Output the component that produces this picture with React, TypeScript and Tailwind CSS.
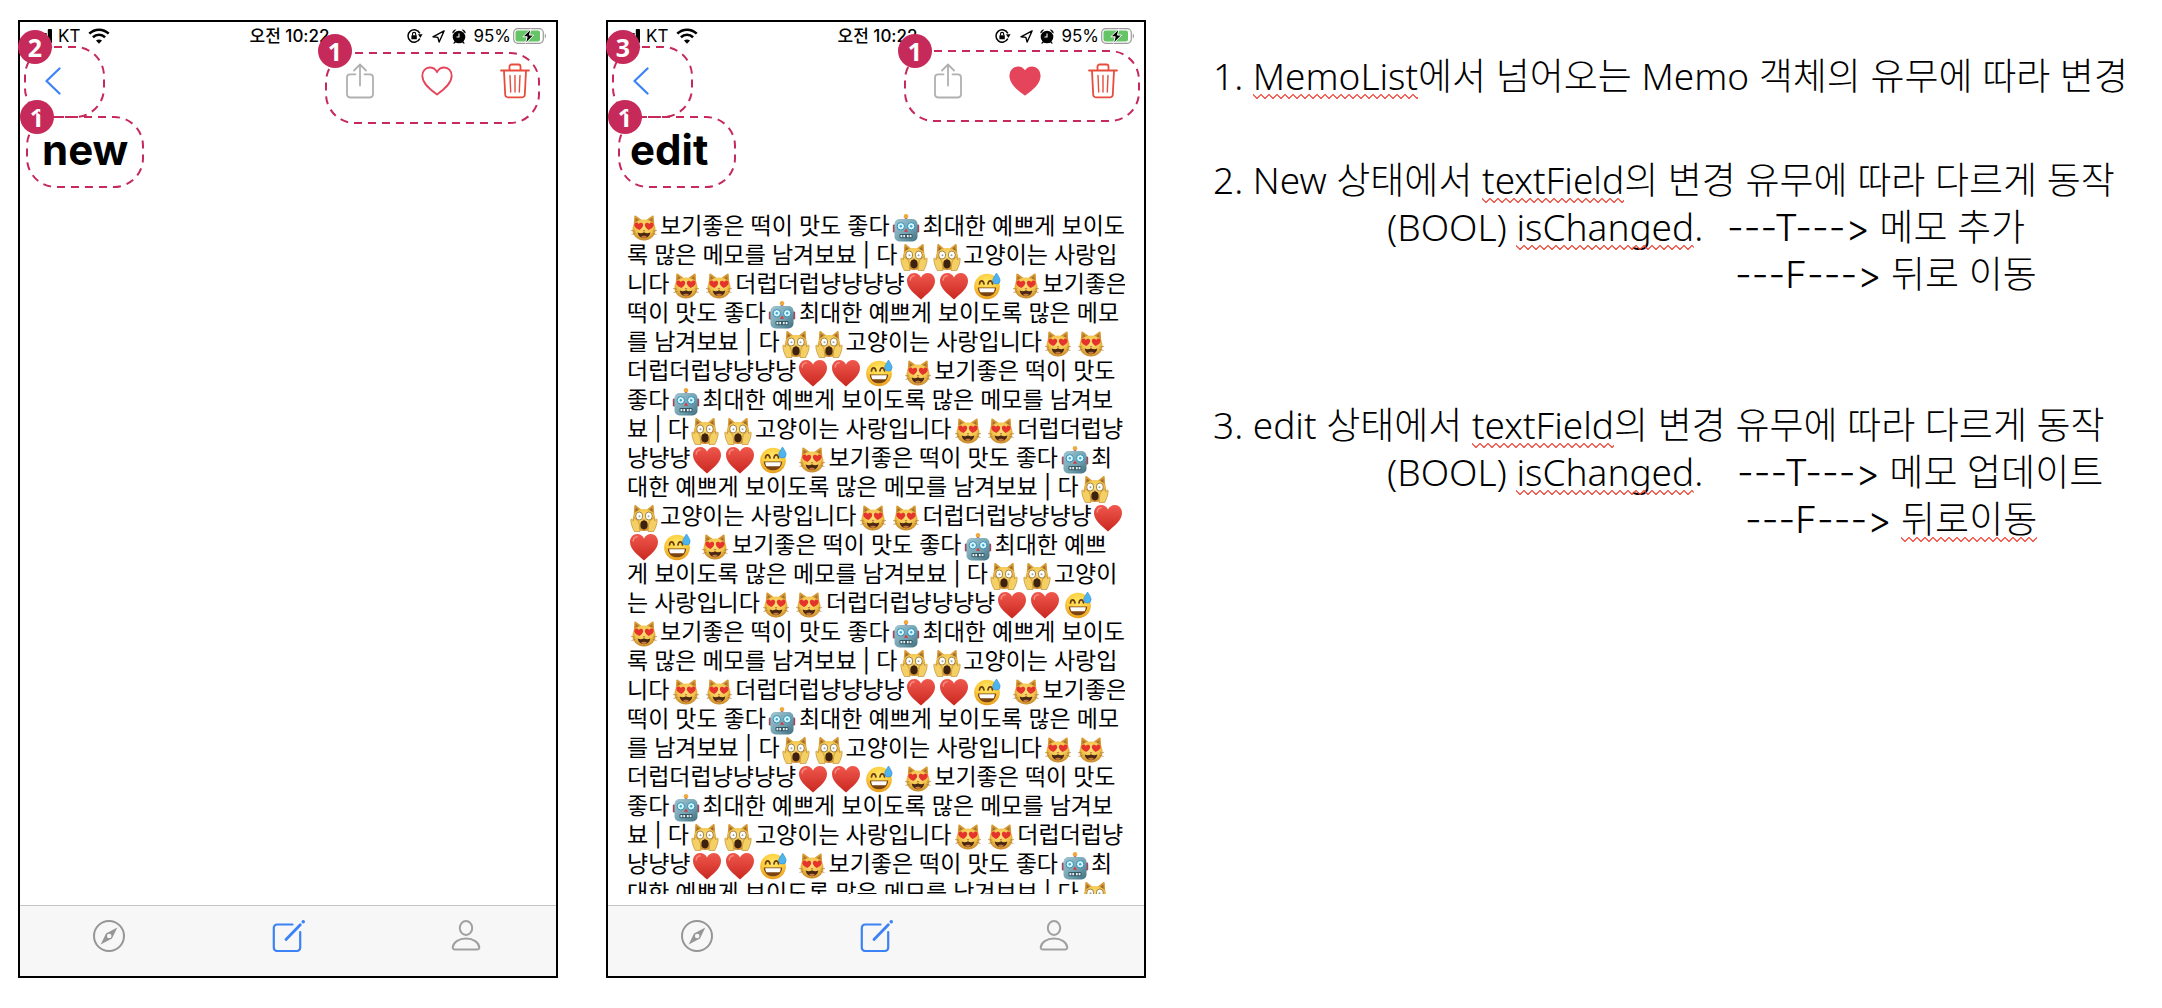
import React from "react";

type EmojiName = "cat" | "robot" | "scream" | "heart" | "sweat";

function EmojiDefs() {
  return (
    <svg width="0" height="0" className="absolute" aria-hidden="true">
      <defs>
        <radialGradient id="catFur" cx="50%" cy="35%" r="65%">
          <stop offset="0" stopColor="#fbe27a" />
          <stop offset="0.6" stopColor="#f2c249" />
          <stop offset="1" stopColor="#c8862a" />
        </radialGradient>
        <radialGradient id="smileSkin" cx="50%" cy="35%" r="65%">
          <stop offset="0" stopColor="#ffe867" />
          <stop offset="0.65" stopColor="#fccb3b" />
          <stop offset="1" stopColor="#e79a1c" />
        </radialGradient>
        <linearGradient id="heartRed" x1="0" y1="0" x2="0" y2="1">
          <stop offset="0" stopColor="#f0584d" />
          <stop offset="1" stopColor="#c9271f" />
        </linearGradient>
        <linearGradient id="robotSteel" x1="0" y1="0" x2="1" y2="1">
          <stop offset="0" stopColor="#a3c6d2" />
          <stop offset="0.6" stopColor="#6f9fae" />
          <stop offset="1" stopColor="#3f6e7e" />
        </linearGradient>

        <symbol id="emoji-cat" viewBox="0 0 28 28">
          <path d="M3.500 14 4.300 2.200c.1-.9 1-1 1.600-.5l5.500 4.100ZM24.500 14l-.8-11.800c-.1-.9-1-1-1.600-.5l-5.500 4.100Z" fill="#d99a33" />
          <path d="m5.300 8 .5-4.300L9 6.200ZM22.700 8l-.5-4.300L19 6.200Z" fill="#a8742f" />
          <path d="M14 5.500c7 0 11.500 4.200 11.500 10.300C25.500 22.500 20 26.500 14 26.500S2.500 22.500 2.500 15.800C2.500 9.700 7 5.500 14 5.500Z" fill="url(#catFur)" />
          <path d="M1 16.500l4 .6M1.500 20.500l4-1.200M27 16.500l-4 .6M26.500 20.500l-4-1.200" stroke="#a06c28" strokeWidth="0.600" fill="none" />
          <path d="M9.300 16C4.300 13.800 3.600 11 4.800 9.300c1.300-1.600 3.400-.9 4 .6 1-1.400 3.400-1.500 4.200.1.700 1.700-.5 4.200-3.700 6Z" fill="#e4342c" />
          <path d="M18.700 16c5-2.200 5.700-5 4.500-6.700-1.300-1.600-3.400-.9-4 .6-1-1.400-3.400-1.500-4.200.1-.7 1.700.5 4.200 3.700 6Z" fill="#e4342c" />
          <path d="M12.700 16.300h2.600L14 17.700Z" fill="#b4553a" />
          <path d="M7.700 18.600c2.300 1 4.500.8 6.300-.3 1.800 1.100 4 1.300 6.300.3-.3 3.500-3 5.600-6.300 5.600s-6-2.100-6.300-5.600Z" fill="#4b2813" />
          <path d="M10.800 22.900c1.400-1.500 5-1.500 6.400 0-1.700 1.500-4.700 1.500-6.400 0Z" fill="#c67a3c" />
        </symbol>

        <symbol id="emoji-scream" viewBox="0 0 28 28">
          <path d="M3.500 14 4.300 1.800c.1-.9 1-1 1.600-.5l5.500 4.500ZM24.500 14l-.8-12.200c-.1-.9-1-1-1.600-.5l-5.500 4.500Z" fill="#d99a33" />
          <path d="m5.300 8 .5-4.500L9 6.200ZM22.700 8l-.5-4.500L19 6.200Z" fill="#9a6a30" />
          <path d="M14 5c7 0 11.300 4.200 11.300 10.800C25.300 23 20.500 27 14 27S2.700 23 2.700 15.800C2.700 9.200 7 5 14 5Z" fill="url(#catFur)" />
          <ellipse cx="9.200" cy="12" rx="3.500" ry="4" fill="#fff" stroke="#8c6a2c" strokeWidth="0.800" />
          <ellipse cx="18.800" cy="12" rx="3.500" ry="4" fill="#fff" stroke="#8c6a2c" strokeWidth="0.800" />
          <circle cx="9.500" cy="12.300" r="1" fill="#9aa3a0" />
          <circle cx="18.500" cy="12.300" r="1" fill="#9aa3a0" />
          <ellipse cx="14" cy="21" rx="3.700" ry="4.400" fill="#3e2210" />
          <path d="M12.600 15.800h2.800L14 17.200Z" fill="#7a3d26" />
          <path d="M.8 15.500c1-.8 1.800 0 2.300 1.300l1-2.300c.9-.9 1.900-.2 1.800 1l1.600.7c1.700 2.300 2 5 2.500 11.300H4.300C2.500 24 .8 20 .8 15.500Z" fill="#f4cf63" stroke="#b88328" strokeWidth="0.600" />
          <path d="M27.200 15.500c-1-.8-1.800 0-2.300 1.300l-1-2.300c-.9-.9-1.900-.2-1.800 1l-1.600.7c-1.700 2.300-2 5-2.500 11.300h5.700c1.800-3.500 3.500-7.500 3.500-12Z" fill="#f4cf63" stroke="#b88328" strokeWidth="0.600" />
        </symbol>

        <symbol id="emoji-heart" viewBox="0 0 28 28">
          <path d="M14 27.500C8 22 0 16.500 0 9 0 4.300 3.200 1 7.200 1c3 0 5.400 1.700 6.800 4.500C15.400 2.700 17.800 1 20.800 1 24.800 1 28 4.300 28 9 28 16.500 20 22 14 27.500Z" fill="url(#heartRed)" />
          <path d="M3.200 8c.2-2.400 1.800-4 4-4.200" stroke="#f98c80" strokeWidth="1.400" strokeLinecap="round" fill="none" />
        </symbol>

        <symbol id="emoji-sweat" viewBox="0 0 28 28">
          <circle cx="14" cy="14.500" r="12.800" fill="url(#smileSkin)" />
          <path d="M6.500 12c.4-4.300 3.800-4.300 4.500 0M15 12c.5-4.300 4-4.300 4.500 0" stroke="#6b3d12" strokeWidth="1.700" fill="none" strokeLinecap="round" />
          <path d="M4.800 15.500h18.400c0 5.300-4 8.800-9.200 8.800s-9.200-3.500-9.200-8.800Z" fill="#7a4312" />
          <path d="M6.200 16.300h15.600c-.1 1.700-.6 2.900-1.300 4h-13c-.7-1.100-1.200-2.300-1.300-4Z" fill="#fff" />
          <path d="M23.500 1c2.200 3.400 3.600 5.500 3.600 7.400a3.700 3.700 0 0 1-7.400 0C19.700 6.500 21.500 4.300 23.500 1Z" fill="#4fb3ee" stroke="#2c8fd4" strokeWidth="0.600" />
        </symbol>

        <symbol id="emoji-robot" viewBox="0 0 28 28">
          <rect x="12.800" y="2" width="2.400" height="4.500" fill="#8a5f9e" />
          <circle cx="14" cy="2.200" r="2.200" fill="#f0a83a" />
          <rect x="0.800" y="10.500" width="3" height="8" rx="1.200" fill="#9b4a5c" />
          <rect x="24.200" y="10.500" width="3" height="8" rx="1.200" fill="#9b4a5c" />
          <rect x="2.500" y="5" width="23" height="22.500" rx="5" fill="url(#robotSteel)" />
          <circle cx="8.800" cy="12.300" r="3.700" fill="#d9f6ff" stroke="#2f8fb5" strokeWidth="1" />
          <circle cx="19.200" cy="12.300" r="3.700" fill="#d9f6ff" stroke="#2f8fb5" strokeWidth="1" />
          <circle cx="8.800" cy="12.300" r="1.200" fill="#3ba9cf" />
          <circle cx="19.200" cy="12.300" r="1.200" fill="#3ba9cf" />
          <path d="m14 14.500 2 3.300h-4Z" fill="#d8383b" />
          <rect x="7.500" y="20" width="13" height="4.200" rx="1.200" fill="#335663" />
          <path d="M8.500 21h1.800v2.200H8.500zM11.300 21h1.800v2.200h-1.800zM14.900 21h1.800v2.200h-1.800zM17.700 21h1.800v2.200h-1.800z" fill="#e6f0f2" />
        </symbol>

        <pattern id="zigzag" width="8" height="6" patternUnits="userSpaceOnUse">
          <path d="M-1 0 4 5 9 0" transform="translate(0 0.5)" stroke="#ea3b2c" strokeWidth="1.200" fill="none" />
        </pattern>
      </defs>
    </svg>
  );
}

const EMOJI: Record<string, { id: EmojiName; label: string }> = {
  C: { id: "cat", label: "하트 눈 고양이" },
  R: { id: "robot", label: "로봇" },
  S: { id: "scream", label: "놀란 고양이" },
  H: { id: "heart", label: "빨간 하트" },
  W: { id: "sweat", label: "식은땀 웃음" },
};

function Emoji({ code }: { code: string }) {
  const { id, label } = EMOJI[code];
  return (
    <span className="inline-flex w-[33px] justify-center align-middle">
      <svg viewBox="0 0 28 28" role="img" aria-label={label} className="h-7 w-7">
        <use href={"#emoji-" + id} />
      </svg>
    </span>
  );
}

const CYCLE = [
  "C보기좋은 떡이 맛도 좋다R최대한 예쁘게 보이도",
  "록 많은 메모를 남겨보뵤 | 다SS고양이는 사랑입",
  "니다CC더럽더럽냥냥냥냥HHW C보기좋은",
  "떡이 맛도 좋다R최대한 예쁘게 보이도록 많은 메모",
  "를 남겨보뵤 | 다SS고양이는 사랑입니다CC",
  "더럽더럽냥냥냥냥HHW C보기좋은 떡이 맛도",
  "좋다R최대한 예쁘게 보이도록 많은 메모를 남겨보",
  "뵤 | 다SS고양이는 사랑입니다CC더럽더럽냥",
  "냥냥냥HHW C보기좋은 떡이 맛도 좋다R최",
  "대한 예쁘게 보이도록 많은 메모를 남겨보뵤 | 다S",
  "S고양이는 사랑입니다CC더럽더럽냥냥냥냥H",
  "HW C보기좋은 떡이 맛도 좋다R최대한 예쁘",
  "게 보이도록 많은 메모를 남겨보뵤 | 다SS고양이",
  "는 사랑입니다CC더럽더럽냥냥냥냥HHW",
];
const MEMO = [...CYCLE, ...CYCLE.slice(0, 10)];

function MemoLine({ text }: { text: string }) {
  return (
    <p className="h-[29px] whitespace-pre">
      {text.split(/([CRSHW|])/).map((part, i) => {
        if (EMOJI[part]) return <Emoji key={i} code={part} />;
        if (part === "|") return <span key={i} className="font-['Inter',sans-serif]">|</span>;
        return <React.Fragment key={i}>{part}</React.Fragment>;
      })}
    </p>
  );
}

function StatusBar() {
  return (
    <div className="flex h-7 items-center pr-[9px] pl-3 font-['Inter','Noto_Sans_CJK_KR',sans-serif] text-[17px] leading-7">
      <div className="flex flex-1 items-center">
        <svg viewBox="0 0 20 14" className="mr-1.5 h-[14px] w-5" aria-label="신호">
          <path d="M0 10h4v4H0zM5.300 7h4v7h-4zM10.600 4h4v10h-4z" />
          <rect x="15.800" y="0" width="4.200" height="14" rx="1" />
        </svg>
        <span>KT</span>
        <svg viewBox="0 0 22 16" className="ml-2 h-4 w-[22px]" fill="none" stroke="#000" strokeWidth="2.600" aria-label="와이파이">
          <path d="M1.300 5.600c5.500-5.200 13.900-5.200 19.400 0M4.900 9.200c3.500-3.200 8.700-3.200 12.200 0" />
          <path d="M11 15.800 8 12.600c1.700-1.500 4.300-1.500 6 0Z" fill="#000" stroke="none" />
        </svg>
      </div>
      <span className="font-medium">오전 10:22</span>
      <div className="flex flex-1 items-center justify-end">
        <svg viewBox="0 0 16 14" className="mr-[9px] h-[14px] w-4" fill="none" stroke="#000" strokeWidth="1.500" aria-label="화면 고정">
          <path d="M12.800 4.300A6.200 6.200 0 1 0 12.800 9.700" />
          <path d="M11 5.300h4.600L13.300 9Z" fill="#000" stroke="none" />
          <rect x="4.400" y="6.300" width="5.400" height="4" rx="0.500" fill="#000" stroke="none" />
          <path d="M5.500 6.500V5a1.600 1.600 0 0 1 3.200 0v1.500" strokeWidth="1.100" />
        </svg>
        <svg viewBox="0 0 14 14" className="mr-[7px] h-[13px] w-[13px]" fill="none" stroke="#000" strokeWidth="1.500" strokeLinejoin="round" aria-label="위치">
          <path d="M13 1 1 7.300l5.300.6L7.700 13Z" />
        </svg>
        <svg viewBox="0 0 14 15" className="mr-[7px] h-[15px] w-[14px]" aria-label="알람">
          <circle cx="7" cy="8" r="6.300" />
          <path d="M.3 3.800C.5 1.700 2.300.2 4.300.5L.9 4.400ZM13.700 3.800C13.500 1.700 11.700.2 9.700.5l3.400 3.900ZM2.500 12.500l-1.400 2h1.600l1.300-1.200ZM11.500 12.500l1.400 2h-1.600L10 13.300Z" />
          <path d="M7 4.500V8H4.500" stroke="#fff" strokeWidth="1.100" fill="none" />
        </svg>
        <span className="mr-0.5">95%</span>
        <svg viewBox="0 0 34 16" className="h-4 w-[34px]" aria-label="배터리">
          <rect x="0.700" y="0.700" width="29.600" height="14.600" rx="4" fill="#fff" stroke="#9a9a9a" strokeWidth="1.200" />
          <rect x="2.500" y="2.500" width="24.500" height="11" rx="2" fill="#64c466" />
          <path d="M31.800 5.500c1.600.8 1.600 4.200 0 5Z" fill="#9a9a9a" />
          <path d="m18 .8-8.200 8h4.400l-1.700 6.500 8.200-8.200h-4.200Z" fill="#000" stroke="#fff" strokeWidth="1" />
        </svg>
      </div>
    </div>
  );
}

function ShareIcon() {
  return (
    <svg viewBox="0 0 28 36" className="h-9 w-7" fill="none" stroke="#b0b0b0" strokeWidth="1.800" strokeLinecap="round" strokeLinejoin="round">
      <path d="M9.500 11.300H4.200A3.200 3.200 0 0 0 1 14.500V31.300a3.200 3.200 0 0 0 3.200 3.200H23.800A3.200 3.200 0 0 0 27 31.300V14.500a3.200 3.200 0 0 0-3.200-3.200H18.500M14 22.500V1.800M8 7.500 14 1.500 20 7.500" />
    </svg>
  );
}

function HeartIcon({ filled }: { filled: boolean }) {
  return (
    <svg viewBox="0 0 32 30" className="h-[30px] w-8" fill={filled ? "#e5455b" : "none"} stroke="#e5455b" strokeWidth="1.800" strokeLinejoin="round">
      <path d="M16 28.500C9 23.500 1.300 17.500 1.300 9.800 1.300 5 4.500 1.500 8.700 1.500c3.300 0 5.900 1.700 7.300 4.700 1.400-3 4-4.700 7.300-4.700 4.200 0 7.400 3.500 7.400 8.300C30.700 17.500 23 23.500 16 28.500Z" />
    </svg>
  );
}

function TrashIcon() {
  return (
    <svg viewBox="0 0 30 36" className="h-9 w-[30px]" fill="none" stroke="#e64d3d" strokeWidth="1.800" strokeLinecap="round" strokeLinejoin="round">
      <path d="M1 7.500H29M9.500 7V3.500A2 2 0 0 1 11.500 1.500H18.500A2 2 0 0 1 20.500 3.500V7M4 8 5.200 31.500A2.600 2.600 0 0 0 7.800 34.300H22.200A2.600 2.600 0 0 0 24.800 31.500L26 8" />
      <path d="M10 12.500 10.700 29M15 12.500V29M20 12.500 19.300 29" strokeWidth="1.400" />
    </svg>
  );
}

function TabBar() {
  return (
    <nav className="flex h-[71px] shrink-0 items-start justify-between border-t border-[#c4c4c4] bg-[#f7f7f7] pt-[13px] pr-[75px] pl-[72px]">
      <button aria-label="둘러보기">
        <svg viewBox="0 0 34 34" className="h-[34px] w-[34px]" fill="none" stroke="#969696" strokeWidth="2">
          <circle cx="17" cy="17" r="15" />
          <path fillRule="evenodd" d="m25.300 8.500-5.300 11L8.700 25.500l5.300-11ZM17.200 14.700a2.300 2.300 0 1 0 0 4.600 2.300 2.300 0 0 0 0-4.600Z" fill="#969696" stroke="none" />
        </svg>
      </button>
      <button aria-label="메모 작성">
        <svg viewBox="0 0 34 34" className="h-[34px] w-[34px]" fill="none" stroke="#3b82f6" strokeWidth="2.200" strokeLinecap="round" strokeLinejoin="round">
          <path d="M20.500 5.500H5A3.200 3.200 0 0 0 1.800 8.700V28.800A3.200 3.200 0 0 0 5 32H25A3.200 3.200 0 0 0 28.200 28.800V13" />
          <path d="M14 20.500 28.300 5.700" strokeWidth="2.800" />
          <path d="M31.200 2.800h.1" strokeWidth="3.400" />
        </svg>
      </button>
      <button aria-label="프로필">
        <svg viewBox="0 0 30 34" className="h-[34px] w-[30px]" fill="none" stroke="#a0a0a0" strokeWidth="2">
          <ellipse cx="15" cy="9" rx="6.200" ry="6.900" />
          <path d="M3.800 30.500C2.500 30.500 1.600 29.600 1.700 28.300 2.200 23.500 7.500 19.500 15 19.500s12.800 4 13.300 8.800c.1 1.300-.8 2.200-2.100 2.200Z" />
        </svg>
      </button>
    </nav>
  );
}

function Badge({ n, className }: { n: number; className: string }) {
  return (
    <span className={"absolute flex h-[34px] w-[34px] items-center justify-center rounded-full bg-[#c62a5a] font-['Noto_Sans',sans-serif] text-[25px] leading-none font-bold text-white " + className}>
      {n}
    </span>
  );
}

function DashedBox({ className }: { className: string }) {
  return (
    <svg className={"absolute h-[72px] overflow-visible " + className} aria-hidden="true">
      <rect x="1" y="1" width="100%" height="70" rx="29" fill="none" stroke="#c62a5a" strokeWidth="2" strokeDasharray="8 6" />
    </svg>
  );
}

function Phone({ title, liked, children, marks }: { title: string; liked: boolean; children: React.ReactNode; marks: React.ReactNode }) {
  return (
    <section className="relative flex aspect-[540/958] flex-col border-2 border-black bg-white">
      <StatusBar />
      <header className="flex h-[62px] items-center justify-between pr-[26px] pl-[25px]">
        <button aria-label="뒤로">
          <svg viewBox="0 0 16 28" className="h-7 w-4" fill="none" stroke="#3b82f6" strokeWidth="2.200" strokeLinecap="round" strokeLinejoin="round">
            <path d="M14.500 1.500 1.500 14 14.500 26.500" />
          </svg>
        </button>
        <div className="flex items-center gap-[47px]">
          <button aria-label="공유"><ShareIcon /></button>
          <button aria-label="좋아요" aria-pressed={liked}><HeartIcon filled={liked} /></button>
          <button aria-label="삭제"><TrashIcon /></button>
        </div>
      </header>
      <h1 className="px-[22px] font-['Inter',sans-serif] text-[42px] leading-[76px] font-bold">{title}</h1>
      <div className="flex min-h-0 flex-1 flex-col px-[19px] pt-[23px] pb-[11px]">{children}</div>
      <TabBar />
      {marks}
    </section>
  );
}

function Misspelled({ children }: { children: React.ReactNode }) {
  return (
    <span className="relative inline-block">
      {children}
      <svg className="absolute bottom-0 left-0 h-1.5 w-full" aria-hidden="true">
        <rect width="100%" height="6" fill="url(#zigzag)" />
      </svg>
    </span>
  );
}

function Arrow({ branch }: { branch: "T" | "F" }) {
  return (
    <span className="font-['Inter',sans-serif] leading-none [font-variant-ligatures:none]">
      ---{branch}---&gt;
    </span>
  );
}

function Note({ heading, trueCase, falseCase }: { heading: React.ReactNode; trueCase: React.ReactNode; falseCase: React.ReactNode }) {
  return (
    <section>
      <p>{heading}</p>
      <p className="flex pl-[174px]">
        <span className="w-[340px]">(BOOL) <Misspelled>isChanged</Misspelled>.</span>
        <span>{trueCase}</span>
      </p>
      <p className="pl-[522px]">{falseCase}</p>
    </section>
  );
}

export default function App() {
  return (
    <main className="grid grid-cols-[minmax(0,540fr)_minmax(0,540fr)_minmax(0,968fr)] items-start gap-x-12 bg-white pt-5 pb-[30px] pl-[18px] text-black">
      <EmojiDefs />
      <Phone
        title="new"
        liked={false}
        marks={
          <>
            <DashedBox className="top-[94px] left-1.5 w-[116px]" />
            <DashedBox className="top-[30px] right-[18px] w-[213px]" />
            <Badge n={1} className="top-[78px] left-0" />
            <DashedBox className="top-6 left-1 w-[79px]" />
            <Badge n={2} className="top-2 -left-0.5" />
            <Badge n={1} className="top-3 right-[204px]" />
          </>
        }
      >
        <textarea aria-label="메모 내용" className="flex-1 resize-none text-[23px] outline-none" />
      </Phone>
      <Phone
        title="edit"
        liked
        marks={
          <>
            <DashedBox className="top-[94px] left-2.5 w-[116px]" />
            <DashedBox className="top-7 right-1.5 w-[234px]" />
            <Badge n={1} className="top-[78px] left-0" />
            <DashedBox className="top-6 left-1 w-[79px]" />
            <Badge n={3} className="top-2 -left-0.5" />
            <Badge n={1} className="top-3 right-[212px]" />
          </>
        }
      >
        <div role="textbox" aria-multiline="true" aria-label="메모 내용" className="min-h-0 flex-1 overflow-hidden font-['Noto_Sans','Noto_Sans_CJK_KR',sans-serif] text-[23px] leading-[29px]">
          {MEMO.map((line, i) => (
            <MemoLine key={i} text={line} />
          ))}
        </div>
      </Phone>
      <article className="flex flex-col pt-8 pl-[19px] font-['Noto_Sans','Noto_Sans_CJK_KR',sans-serif] text-[37px] leading-[47px] font-light whitespace-pre">
        <p className="mb-[57px]">1. <Misspelled>MemoList</Misspelled>에서 넘어오는 Memo 객체의 유무에 따라 변경</p>
        <div className="flex flex-col gap-[104px]">
          <Note
            heading={<>2. New 상태에서 <Misspelled>textField</Misspelled>의 변경 유무에 따라 다르게 동작</>}
            trueCase={<><Arrow branch="T" /> 메모 추가</>}
            falseCase={<><Arrow branch="F" /> 뒤로 이동</>}
          />
          <Note
            heading={<>3. edit 상태에서 <Misspelled>textField</Misspelled>의 변경 유무에 따라 다르게 동작</>}
            trueCase={<span className="pl-2.5"><Arrow branch="T" /> 메모 업데이트</span>}
            falseCase={<span className="pl-2.5"><Arrow branch="F" /> <Misspelled>뒤로이동</Misspelled></span>}
          />
        </div>
      </article>
    </main>
  );
}
